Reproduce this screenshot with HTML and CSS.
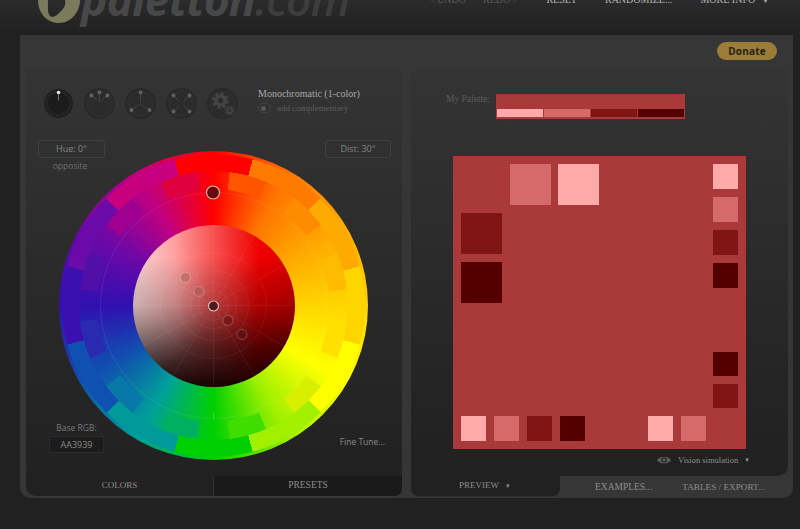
FILE: index.html
```html
<!DOCTYPE html>
<html lang="en">
<head>
    <meta charset="UTF-8">
    <title>Paletton - The Color Scheme Designer</title>
    <link rel="stylesheet" href="styles.css">
</head>
<body>
    <svg class="defs" width="0" height="0">
        <defs>
            <g id="dial-base">
                <circle r="15" class="dial-bg"/>
                <circle r="12" class="dial-ticks"/>
            </g>
            <g id="tick-pair">
                <line y1="-113" y2="-107"/>
                <line y1="113" y2="107"/>
            </g>
            <g id="spoke-pair">
                <line y1="-81" y2="81"/>
            </g>
        </defs>
    </svg>

    <div class="header">
        <div class="logo">
            <svg class="logo-mark" width="44" height="26" viewBox="0 0 44 26">
                <path d="M0 0 C0 13 9 23 21 23 C33 23 42 12 42 0 L27 0 C28 5 26 8 24 10 C21 13 18 17 14 17 C9 16 10 8 10 0 Z"/>
            </svg>
            <span class="logo-text">paletton<span class="logo-com">.com</span></span>
        </div>
        <div class="nav">
            <span class="nav-item dim undo">&lt; UNDO</span>
            <span class="nav-item dim redo">REDO &gt;</span>
            <span class="nav-item reset">RESET</span>
            <span class="nav-item randomize">RANDOMIZE...</span>
            <span class="nav-item more">MORE INFO <i class="caret">&#9662;</i></span>
        </div>
    </div>

    <div class="frame">
        <div class="donate-row">
            <button class="donate">Donate</button>
        </div>
        <div class="panels">
            <!-- colors -->
            <div class="left">
                <div class="left-body">
                    <div class="schemes">
                        <div class="dials">
                            <svg class="dial" viewBox="-15.5 -15.5 31 31">
                                <circle r="15" class="dial-bg on"/>
                                <circle r="12" class="dial-ticks on"/>
                                <line y1="-10" y2="-3" class="dial-line on"/>
                                <circle cy="-11" r="1.8" fill="#e8e8e8"/>
                            </svg>
                            <svg class="dial" viewBox="-15.5 -15.5 31 31">
                                <use href="#dial-base"/>
                                <g class="dial-arm">
                                    <line x1="0" y1="-2" x2="0" y2="-10"/><line x1="-1" y1="-2" x2="-7" y2="-8"/><line x1="1" y1="-2" x2="7" y2="-8"/>
                                    <circle cy="-11" r="1.9"/><circle cx="-8" cy="-8" r="1.9"/><circle cx="8" cy="-8" r="1.9"/>
                                </g>
                            </svg>
                            <svg class="dial" viewBox="-15.5 -15.5 31 31">
                                <use href="#dial-base"/>
                                <g class="dial-arm">
                                    <line x1="0" y1="-2" x2="0" y2="-10"/><line x1="-1" y1="1" x2="-8" y2="6"/><line x1="1" y1="1" x2="8" y2="6"/>
                                    <circle cy="-11" r="1.9"/><circle cx="-9" cy="6.5" r="1.9"/><circle cx="9" cy="6.5" r="1.9"/>
                                </g>
                            </svg>
                            <svg class="dial" viewBox="-15.5 -15.5 31 31">
                                <use href="#dial-base"/>
                                <g class="dial-arm">
                                    <line x1="-2" y1="-2" x2="-7" y2="-7"/><line x1="2" y1="-2" x2="7" y2="-7"/><line x1="-2" y1="2" x2="-7" y2="7"/><line x1="2" y1="2" x2="7" y2="7"/>
                                    <circle cx="-8" cy="-8" r="1.9"/><circle cx="8" cy="-8" r="1.9"/><circle cx="-8" cy="8" r="1.9"/><circle cx="8" cy="8" r="1.9"/>
                                </g>
                            </svg>
                            <svg class="dial" viewBox="-15.5 -15.5 31 31">
                                <use href="#dial-base"/>
                                <circle cx="-2" cy="-3" r="4.5" class="gear"/>
                                <circle cx="-2" cy="-3" r="7.2" class="gear-teeth"/>
                                <circle cx="7" cy="7" r="2.4" class="gear small"/>
                                <circle cx="7" cy="7" r="4.2" class="gear-teeth small"/>
                            </svg>
                        </div>
                        <div class="scheme-info">
                            <div class="scheme-name">Monochromatic (1-color)</div>
                            <div class="scheme-opt"><span class="toggle"><i></i></span>add complementary</div>
                        </div>
                    </div>

                    <div class="stage">
                        <div class="wheel">
                            <div class="hue-ring smooth"></div>
                            <div class="hue-ring blocks"></div>
                            <div class="hue-ring teeth"></div>
                            <div class="sat-disc"></div>
                            <svg class="wheel-lines" viewBox="-154.5 -154.5 309 309">
                                <circle r="113" class="ring"/>
                                <g class="ticks">
                                    <use href="#tick-pair" transform="rotate(15)"/>
                                    <use href="#tick-pair" transform="rotate(30)"/>
                                    <use href="#tick-pair" transform="rotate(45)"/>
                                    <use href="#tick-pair" transform="rotate(60)"/>
                                    <use href="#tick-pair" transform="rotate(75)"/>
                                    <use href="#tick-pair" transform="rotate(90)"/>
                                    <use href="#tick-pair" transform="rotate(105)"/>
                                    <use href="#tick-pair" transform="rotate(120)"/>
                                    <use href="#tick-pair" transform="rotate(135)"/>
                                    <use href="#tick-pair" transform="rotate(150)"/>
                                    <use href="#tick-pair" transform="rotate(165)"/>
                                    <line y1="113" y2="107"/>
                                </g>
                                <g class="disc-grid">
                                    <circle r="23"/><circle r="35"/><circle r="53"/><circle r="15"/>
                                    <use href="#spoke-pair"/>
                                    <use href="#spoke-pair" transform="rotate(30)"/>
                                    <use href="#spoke-pair" transform="rotate(60)"/>
                                    <use href="#spoke-pair" transform="rotate(90)"/>
                                    <use href="#spoke-pair" transform="rotate(120)"/>
                                    <use href="#spoke-pair" transform="rotate(150)"/>
                                </g>
                                <circle cx="-0.5" cy="-113" r="6.5" class="pin main" fill="#660b0b"/>
                                <circle cx="-28" cy="-28" r="5" class="pin" fill="#c46e6e"/>
                                <circle cx="-14.5" cy="-14" r="5" class="pin" fill="#b85c5c"/>
                                <circle cx="0" cy="0.5" r="5" class="pin main" fill="#4e1a1a"/>
                                <circle cx="14.5" cy="15" r="5" class="pin" fill="#781818"/>
                                <circle cx="28.5" cy="29" r="5" class="pin" fill="#600e0e"/>
                            </svg>
                        </div>
                        <div class="corner hue-box">
                            <div class="field">Hue: 0°</div>
                            <div class="field-note">opposite</div>
                        </div>
                        <div class="corner dist-box">
                            <div class="field">Dist: 30°</div>
                        </div>
                        <div class="corner rgb-box">
                            <div class="field-note">Base RGB:</div>
                            <div class="rgb-value">AA3939</div>
                        </div>
                        <div class="corner fine-tune">Fine Tune...</div>
                    </div>
                </div>
                <div class="left-tabs">
                    <div class="tab colors-tab">COLORS</div>
                    <div class="tab presets-tab">PRESETS</div>
                </div>
            </div>

            <!-- preview -->
            <div class="right">
                <div class="right-body">
                    <div class="my-palette">
                        <span class="my-label">My Palette:</span>
                        <div class="palette-bar">
                            <div class="strip">
                                <i class="c1"></i><i class="c2"></i><i class="c3"></i><i class="c4"></i>
                            </div>
                        </div>
                    </div>
                    <div class="preview">
                        <div class="preview-main">
                            <div class="col-big lower">
                                <div class="big c3"></div>
                                <div class="big c4"></div>
                            </div>
                            <div class="row-big">
                                <div class="big c2"></div>
                                <div class="big c1"></div>
                            </div>
                            <div class="col-small">
                                <div class="small-group">
                                    <div class="small c1"></div>
                                    <div class="small c2"></div>
                                    <div class="small c3"></div>
                                    <div class="small c4"></div>
                                </div>
                                <div class="small-group tight">
                                    <div class="small c4"></div>
                                    <div class="small c3"></div>
                                </div>
                            </div>
                        </div>
                        <div class="preview-bottom">
                            <div class="small-group across">
                                <div class="small c1"></div>
                                <div class="small c2"></div>
                                <div class="small c3"></div>
                                <div class="small c4"></div>
                            </div>
                            <div class="small-group across">
                                <div class="small c1"></div>
                                <div class="small c2"></div>
                            </div>
                        </div>
                    </div>
                    <div class="vision">
                        <svg width="14" height="10" viewBox="0 0 14 10">
                            <path d="M0 5 C3 0.5 11 0.5 14 5 C11 9.5 3 9.5 0 5 Z" fill="#5c5c5c"/>
                            <circle cx="7" cy="5" r="2.8" fill="#222"/>
                            <circle cx="7" cy="5" r="1.7" fill="#5c5c5c"/>
                        </svg>
                        <span>Vision simulation</span>
                        <i class="caret">&#9662;</i>
                    </div>
                </div>
                <div class="right-tabs">
                    <div class="tab preview-tab">PREVIEW <i class="caret">&#9662;</i></div>
                    <div class="tab examples-tab">EXAMPLES...</div>
                    <div class="tab tables-tab">TABLES / EXPORT...</div>
                </div>
            </div>
        </div>
    </div>
</body>
</html>
```

FILE: styles.css
```css
* {
    margin: 0;
    padding: 0;
    box-sizing: border-box;
}
html, body {
    height: 529px;
    overflow: hidden;
}
body {
    background: #212121;
    font-family: "Liberation Serif", serif;
    color: #999;
}
.defs {
    display: block;
    height: 0;
}
i {
    font-style: normal;
}
.caret {
    font-family: "DejaVu Sans", sans-serif;
    font-size: 7px;
}

/* Header */
.header {
    height: 35px;
    display: flex;
    overflow: hidden;
    background: linear-gradient(#2b2b2b, #202020);
}
.logo {
    width: 429px;
    padding-left: 38px;
    height: 35px;
    display: flex;
    align-items: flex-start;
    flex-shrink: 0;
}
.logo-mark {
    fill: #7c7a5c;
    flex-shrink: 0;
}
.logo-text {
    font-family: "Open Sans", sans-serif;
    font-weight: 700;
    font-style: italic;
    font-size: 44.5px;
    line-height: 46px;
    margin-top: -24px;
    margin-left: -1px;
    color: #484848;
    letter-spacing: -0.8px;
}
.logo-com {
    color: #3d3d3d;
    font-weight: 600;
}
.nav {
    display: flex;
    margin-top: -7px;
    height: 14px;
    font-size: 10px;
    line-height: 14px;
    color: #b5b5b5;
    white-space: nowrap;
}
.nav-item.dim {
    color: #5a5a5a;
}
.redo {
    margin-left: 17px;
}
.reset {
    margin-left: 28px;
}
.randomize {
    margin-left: 28px;
}
.more {
    margin-left: 28px;
}
.more .caret {
    margin-left: 6px;
}

/* Frame */
.frame {
    margin-left: 20px;
    width: 773px;
    height: 463px;
    background: #363636;
    border-radius: 0 0 10px 10px;
    padding: 0 5px 1px 6px;
    display: flex;
    flex-direction: column;
}
.donate-row {
    height: 35px;
    display: flex;
    justify-content: flex-end;
    padding: 7px 11px 0 0;
}
.donate {
    width: 60px;
    height: 18px;
    border: none;
    border-radius: 9px;
    background: #9c7d38;
    color: #26210f;
    font-family: "Open Sans", sans-serif;
    font-weight: 700;
    font-size: 10px;
    letter-spacing: 0.2px;
}
.panels {
    display: flex;
    gap: 9px;
    height: 427px;
}
.left, .right {
    width: 377px;
    display: flex;
    flex-direction: column;
}
.left {
    width: 376px;
    background: linear-gradient(#343434, #212121 96%);
    border-radius: 0 0 8px 10px;
    border-bottom: 1px solid #3a3a3a;
    overflow: hidden;
}
.left-body {
    height: 406px;
    display: flex;
    flex-direction: column;
}

/* Scheme dials */
.schemes {
    height: 66px;
    padding: 18px 0 0 17px;
    display: flex;
}
.dials {
    display: flex;
    gap: 10px;
    height: 31px;
}
.dial {
    width: 31px;
    height: 31px;
}
.dial-bg {
    fill: #2b2b2b;
    stroke: #272727;
    stroke-width: 1;
}
.dial-bg.on {
    fill: #1b1b1b;
    stroke: #343434;
}
.dial-ticks {
    fill: none;
    stroke: #313131;
    stroke-width: 3;
    stroke-dasharray: 1.2 1.3;
}
.dial-ticks.on {
    stroke: #2e2e2e;
}
.dial-line.on {
    stroke: #707070;
    stroke-width: 1;
}
.dial-arm line {
    stroke: #484848;
    stroke-width: 0.8;
}
.dial-arm circle {
    fill: #636363;
}
.gear {
    fill: #2b2b2b;
    stroke: #454545;
    stroke-width: 3.5;
}
.gear.small {
    stroke-width: 2;
    stroke: #424242;
}
.gear-teeth {
    fill: none;
    stroke: #454545;
    stroke-width: 2.4;
    stroke-dasharray: 3.2 2.45;
}
.gear-teeth.small {
    stroke: #424242;
    stroke-width: 1.4;
    stroke-dasharray: 1.8 1.5;
}
.scheme-info {
    margin-left: 20px;
}
.scheme-name {
    font-size: 10px;
    line-height: 14px;
    margin-top: -1px;
    color: #a8a8a8;
    white-space: nowrap;
}
.scheme-opt {
    display: flex;
    align-items: center;
    font-size: 9px;
    color: #5e5e5e;
    margin-top: 2px;
    white-space: nowrap;
}
.toggle {
    width: 13px;
    height: 10px;
    border: 1px solid #444;
    border-radius: 5px;
    background: #303030;
    margin-right: 6px;
    display: flex;
    align-items: center;
    padding-left: 2px;
}
.toggle i {
    width: 5px;
    height: 5px;
    border-radius: 50%;
    background: #555;
}

/* Wheel */
.stage {
    flex: 1;
    display: grid;
    grid-template: 1fr / 1fr;
}
.stage > * {
    grid-area: 1 / 1;
}
.wheel {
    position: relative;
    width: 309px;
    height: 309px;
    margin: 15px 0 0 33px;
}
.hue-ring {
    position: absolute;
    inset: 0;
    border-radius: 50%;
}
.hue-ring.smooth {
    background: conic-gradient(#f00 0deg, #ff4000 15deg, #ff7700 30deg, #ffaa00 60deg, #ffd500 90deg, #ff0 120deg, #a0f000 150deg, #00d000 180deg, #00a098 210deg, #1050b0 240deg, #3010b0 270deg, #6a08a8 300deg, #c00080 330deg, #e00040 345deg, #f00 360deg);
}
.hue-ring.blocks {
    background: conic-gradient(from -15deg, #f00 0 30deg, #ff7a00 0 60deg, #ffaa00 0 90deg, #ffd500 0 120deg, #ff0 0 150deg, #a0f000 0 180deg, #00d000 0 210deg, #009a9a 0 240deg, #1050b0 0 270deg, #3a10b0 0 300deg, #6a0aa8 0 330deg, #c80080 0 360deg);
    -webkit-mask: radial-gradient(circle, transparent 134px, #000 134.5px, #000 151px, transparent 151.5px);
    mask: radial-gradient(circle, transparent 134px, #000 134.5px, #000 151px, transparent 151.5px);
}
.hue-ring.teeth {
    background: conic-gradient(transparent 0 7deg, #ff5500 0 23deg, transparent 0 37deg, #ff8c00 0 53deg, transparent 0 67deg, #ffbb00 0 83deg, transparent 0 97deg, #ffe000 0 113deg, transparent 0 127deg, #d8f000 0 143deg, transparent 0 157deg, #40dd00 0 173deg, transparent 0 187deg, #00b060 0 203deg, transparent 0 217deg, #0878a8 0 233deg, transparent 0 247deg, #2a2ab0 0 263deg, transparent 0 277deg, #5010a8 0 293deg, transparent 0 307deg, #a00090 0 323deg, transparent 0 337deg, #e00040 0 353deg, transparent 0 360deg);
    -webkit-mask: radial-gradient(circle, transparent 116px, #000 116.5px, #000 134px, transparent 134.5px);
    mask: radial-gradient(circle, transparent 116px, #000 116.5px, #000 134px, transparent 134.5px);
}
.sat-disc {
    position: absolute;
    top: 73.5px;
    left: 73.5px;
    width: 162px;
    height: 162px;
    border-radius: 50%;
    background:
        radial-gradient(circle at 0% 48%, rgba(255, 225, 225, 0.3), rgba(255, 225, 225, 0) 40%),
        linear-gradient(transparent 20%, rgba(0, 0, 0, 0.28) 50%, rgba(0, 0, 0, 0.65) 75%, rgba(15, 0, 0, 0.97) 100%),
        linear-gradient(90deg, #f8d4d4 0%, #ffa0a0 25%, #f65050 50%, #f00000 78%, #dc0000 100%);
}
.wheel-lines {
    position: absolute;
    inset: 0;
    width: 309px;
    height: 309px;
}
.ring {
    fill: none;
    stroke: rgba(255, 255, 255, 0.09);
}
.ticks line {
    stroke: rgba(255, 255, 255, 0.24);
}
.disc-grid {
    fill: none;
    stroke: rgba(255, 255, 255, 0.06);
}
.pin {
    stroke: rgba(255, 255, 255, 0.22);
    stroke-width: 1;
}
.pin.main {
    stroke: #d8b4b4;
    stroke-width: 1.2;
}
.corner {
    font-family: "Open Sans", sans-serif;
    font-size: 8.5px;
    color: #7c7c7c;
}
.hue-box {
    justify-self: start;
    align-self: start;
    margin: 4px 0 0 12px;
    width: 67px;
    text-align: center;
}
.dist-box {
    justify-self: end;
    align-self: start;
    margin: 4px 11px 0 0;
    width: 66px;
    text-align: center;
}
.field {
    height: 18px;
    line-height: 16px;
    border: 1px solid #404040;
    border-radius: 3px;
    font-size: 9px;
    color: #858585;
}
.field-note {
    font-size: 8.5px;
    line-height: 13px;
    margin-top: 1px;
    padding-right: 3px;
    color: #6e6e6e;
}
.rgb-box {
    justify-self: start;
    align-self: end;
    margin: 0 0 23px 23px;
    width: 55px;
    text-align: center;
}
.rgb-box .field-note {
    padding-right: 0;
    margin-bottom: 2px;
    color: #7a7a7a;
}
.rgb-value {
    height: 17px;
    line-height: 15px;
    background: #1c1c1c;
    border: 1px solid #2b2b2b;
    font-size: 9px;
    color: #8a8a8a;
}
.fine-tune {
    justify-self: end;
    align-self: end;
    margin: 0 17px 29px 0;
    color: #888;
}

/* Tabs */
.tab {
    font-size: 9.5px;
    color: #8c8c8c;
    text-align: center;
    white-space: nowrap;
}
.left-tabs {
    height: 20px;
    display: flex;
    line-height: 18px;
}
.colors-tab {
    width: 188px;
    border-right: 1px solid #333;
    font-size: 9px;
}
.presets-tab {
    flex: 1;
    background: #1a1a1a;
}
.right-body {
    height: 406px;
    background: linear-gradient(#343434, #212121 96%);
    border-radius: 0 0 10px 0;
    display: flex;
    flex-direction: column;
}
.right-tabs {
    height: 21px;
    display: flex;
}
.preview-tab {
    width: 149px;
    background: #212121;
    border-radius: 0 0 8px 8px;
    border-bottom: 1px solid #303030;
    line-height: 18px;
    text-align: left;
    padding-left: 48px;
    font-size: 9px;
}
.preview-tab .caret {
    margin-left: 5px;
}
.examples-tab {
    margin-left: 35px;
    line-height: 22px;
}
.tables-tab {
    margin-left: 30px;
    line-height: 22px;
    font-size: 9.2px;
}

/* Palette */
.c1 { background: #ffaaaa; }
.c2 { background: #d46a6a; }
.c3 { background: #801515; }
.c4 { background: #550000; }
.my-palette {
    height: 86px;
    padding: 24px 0 0 35px;
    display: flex;
    align-items: flex-start;
}
.my-label {
    width: 50px;
    margin-top: -1px;
    font-size: 9.5px;
    line-height: 13px;
    color: #5c5c5c;
    white-space: nowrap;
}
.palette-bar {
    width: 189px;
    height: 25px;
    background: #aa3939;
    padding: 15px 1px 1px;
}
.strip {
    display: flex;
    height: 8px;
    gap: 1px;
}
.strip i {
    flex: 1;
}

/* Preview square */
.preview {
    margin-left: 42px;
    width: 293px;
    height: 293px;
    background: #aa3939;
    padding: 8px;
    display: flex;
    flex-direction: column;
    gap: 8px;
}
.preview-main {
    height: 245px;
    display: flex;
}
.col-big {
    display: flex;
    flex-direction: column;
    gap: 8px;
}
.col-big.lower {
    padding-top: 49px;
}
.row-big {
    display: flex;
    gap: 7px;
    margin-left: 8px;
    height: 41px;
}
.big {
    width: 41px;
    height: 41px;
}
.col-small {
    margin-left: auto;
    display: flex;
    flex-direction: column;
    justify-content: space-between;
}
.small-group {
    display: flex;
    flex-direction: column;
    gap: 8px;
}
.small-group.tight .small {
    height: 24px;
}
.small-group.across {
    flex-direction: row;
}
.small {
    width: 25px;
    height: 25px;
}
.preview-bottom {
    display: flex;
    justify-content: space-between;
    padding-right: 32px;
}

/* Vision */
.vision {
    display: flex;
    align-items: center;
    height: 20px;
    margin-top: 1px;
    padding-left: 246px;
    font-size: 8.5px;
    color: #8f8f8f;
    white-space: nowrap;
}
.vision span {
    margin-left: 7px;
}
.vision .caret {
    margin-left: 7px;
}
```
